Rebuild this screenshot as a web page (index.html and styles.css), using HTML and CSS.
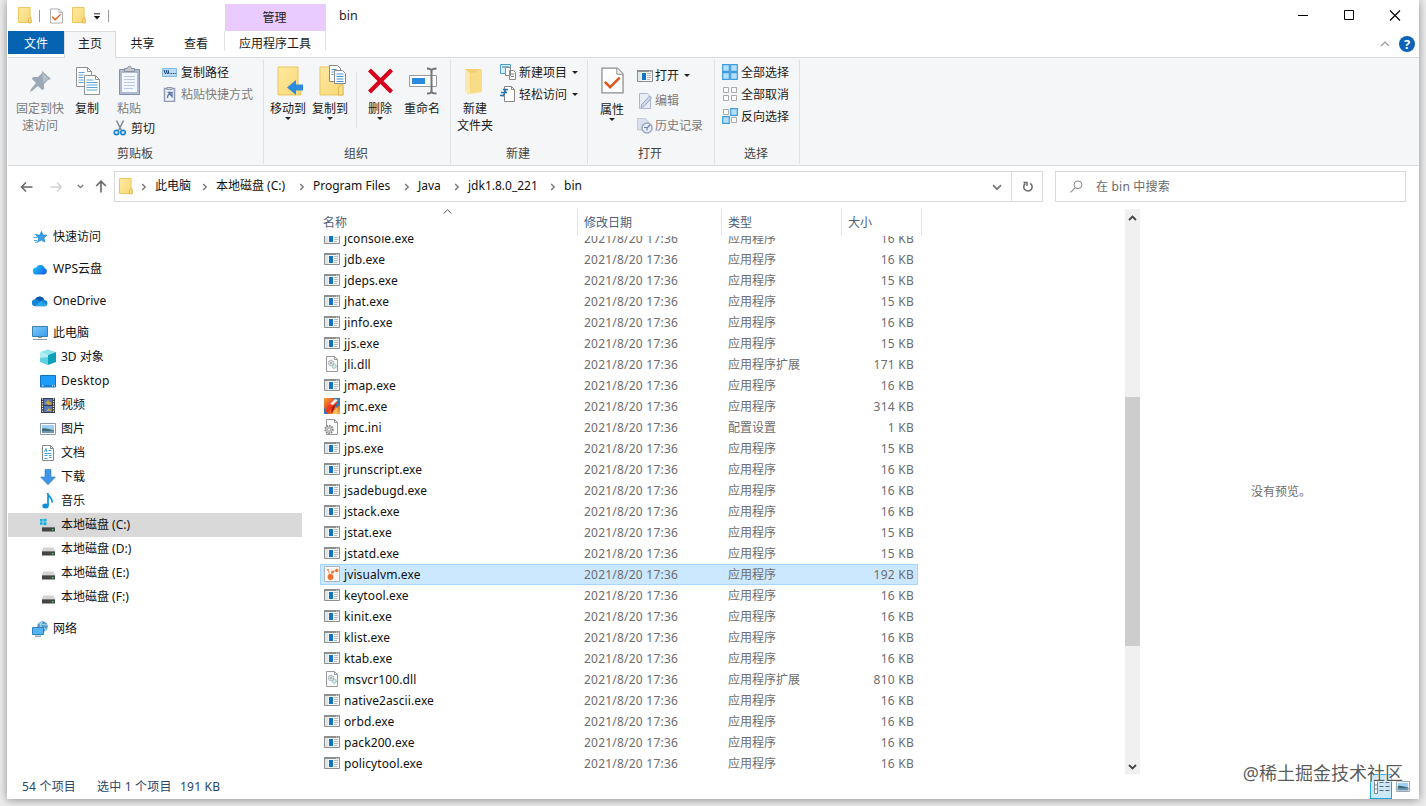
FILE: index.html
```html
<!DOCTYPE html>
<html lang="zh-CN">
<head>
<meta charset="utf-8">
<title>bin</title>
<link rel="stylesheet" href="styles.css">
</head>
<body>
<svg class="defs" width="0" height="0" aria-hidden="true">
  <defs>
    <linearGradient id="g-fold" x1="0" y1="0" x2="1" y2="1"><stop offset="0" stop-color="#ffe9a2"/><stop offset="1" stop-color="#f7d774"/></linearGradient>
    <linearGradient id="g-screen" x1="0" y1="0" x2="1" y2="1"><stop offset="0" stop-color="#7cc8fb"/><stop offset="1" stop-color="#3b9de8"/></linearGradient>
    <linearGradient id="g-wps" x1="0" y1="0" x2="1" y2="0.6"><stop offset="0" stop-color="#1fd3f5"/><stop offset="1" stop-color="#1565f0"/></linearGradient>
    <linearGradient id="g-jmc" x1="0" y1="0" x2="1" y2="1"><stop offset="0" stop-color="#f6a13a"/><stop offset=".5" stop-color="#e2401c"/><stop offset="1" stop-color="#f7b24a"/></linearGradient>
  </defs>
  <symbol id="folder" viewBox="0 0 14 17"><path d="M.5.5h11.6v11l1.2.9v3.1H.5z" fill="url(#g-fold)" stroke="#edc75f"/><path d="M10.5 16V12l2.5-1.5V16z" fill="#fbe08a" stroke="#e3b341" stroke-width=".8"/></symbol>
  <symbol id="doccheck" viewBox="0 0 24 28"><path d="M1 1h16l6 6v20H1z" fill="#fff" stroke="#8c8c8c" stroke-width="1.3"/><path d="M16.500 1v6.500H23" fill="#eee" stroke="#8c8c8c"/><path d="M4 15.500l5.500 5.500L19.500 11" fill="none" stroke="#e0561b" stroke-width="2.600"/></symbol>
  <symbol id="exe" viewBox="0 0 16 12"><path d="M.5.5h15v11H.5z" fill="#f5f5f5" stroke="#8b8f92"/><path d="M0 0h16v2H0z" fill="#8b8f92"/><path d="M12 .7h1v.8h-1zM14 .7h1v.8h-1z" fill="#fff"/><path d="M1 2h3v9H1z" fill="#dfe8e8"/><path d="M5 3h4v7H5z" fill="#0f73c6"/><path d="M10 3.500h4M10 5.500h4M10 7.500h4M10 9.500h3" stroke="#a7acb0" stroke-width=".8"/></symbol>
  <symbol id="dll" viewBox="0 0 16 16"><path d="M2.500.5h8l3 3v12h-11z" fill="#fbfbfb" stroke="#999"/><path d="M10.500.5v3h3" fill="none" stroke="#999"/><circle cx="7" cy="7" r="2.700" fill="#e0e4e5" stroke="#8b969b" stroke-dasharray="1.2 .6"/><circle cx="7" cy="7" r=".9" fill="#8b969b"/><circle cx="10.200" cy="10.300" r="2" fill="#d2eaec" stroke="#7fa9ad" stroke-dasharray="1 .5"/></symbol>
  <symbol id="ini" viewBox="0 0 16 16"><path d="M2.500.5h8l3 3v12h-11z" fill="#fbfbfb" stroke="#999"/><path d="M10.500.5v3h3" fill="none" stroke="#999"/><circle cx="5" cy="10.500" r="3.800" fill="#ccc" stroke="#8c8c8c" stroke-width="1.800" stroke-dasharray="1.500 1"/><circle cx="5" cy="10.500" r="1.500" fill="#fff" stroke="#888" stroke-width=".7"/></symbol>
  <symbol id="jmc" viewBox="0 0 16 16"><path d="M0 0h16v16H0z" fill="url(#g-jmc)"/><path d="M10 0h6v7l-4 3zM0 9l4 7H0z" fill="#3976ad"/><path d="M1 13l5-7 4-4 4 3-6 3-4 7z" fill="#f43a1d"/><path d="M6 6l5-5 3 1-5 5z" fill="#f5ede9"/><path d="M8 9l4-3-3 7-2 2z" fill="#9c1b10"/><path d="M9 14l4-5 1 7H9z" fill="#f9bd52"/></symbol>
  <symbol id="jvm" viewBox="0 0 16 16"><path d="M.5.5h15v15H.5z" fill="#fdf8f4" stroke="#aab9c5"/><path d="M6.500 10.500L4 4M6.500 10.500l2.500-5 4-1" fill="none" stroke="#f2a47e"/><circle cx="6.500" cy="11" r="2.900" fill="#ee702f"/><circle cx="4" cy="3.800" r=".9" fill="#ee702f"/><circle cx="8.500" cy="6" r="1.500" fill="#e9783c"/><circle cx="12.700" cy="4.500" r="1.700" fill="#ee702f"/></symbol>
  <symbol id="chev" viewBox="0 0 6 8"><path d="M1.200 1l3 3-3 3" fill="none" stroke="#777" stroke-width="1.400"/></symbol>
  <symbol id="drive" viewBox="0 0 16 16"><path d="M3.500 6.500h10l1.500 4H2z" fill="#d2d2d2"/><path d="M2 10.300h13v4.200H2z" fill="#444"/><path d="M2 10h13v1H2z" fill="#777"/><path d="M12 12h1.500v1.300H12z" fill="#42e06c"/></symbol>
  <symbol id="pic" viewBox="0 0 16 12"><path d="M.5.500h15v11H.5z" fill="#fff" stroke="#8b99a8"/><path d="M2 2h12v8H2z" fill="#9fd0f3"/><path d="M2 5.500c4-1 8 1.500 12 1.500v3H2z" fill="#3f6c72"/><path d="M2 8c4 0 8 0 12-.5V10H2z" fill="#6d95b5"/></symbol>
</svg>

<div class="window">
  <header class="titlebar">
    <div class="quick">
      <svg width="14" height="17"><use href="#folder"/></svg><i class="qsep"></i>
      <svg class="q-check" width="13" height="16"><use href="#doccheck"/></svg>
      <svg class="q-new" width="14" height="17"><use href="#folder"/></svg>
      <svg class="q-more" width="8" height="7" viewBox="0 0 8 7"><path d="M1 .8h6" stroke="#222" stroke-width="1"/><path d="M.8 3h6.400L4 6.500z" fill="#111"/></svg>
      <i class="qsep"></i>
    </div>
    <div class="context-head">管理</div>
    <div class="title">bin</div>
    <div class="controls">
      <svg width="12" height="12" viewBox="0 0 12 12"><path d="M1 5.500h10" stroke="#000"/></svg>
      <svg width="12" height="12" viewBox="0 0 12 12"><path d="M1.500.5h9v9h-9z" fill="none" stroke="#000"/></svg>
      <svg width="12" height="12" viewBox="0 0 12 12"><path d="M1 .5l10 10M11 .5l-10 10" stroke="#000" stroke-width="1.100"/></svg>
    </div>
  </header>

  <nav class="tabs">
    <span class="tab file">文件</span>
    <span class="tab active">主页</span>
    <span class="tab share">共享</span>
    <span class="tab view">查看</span>
    <span class="tab context">应用程序工具</span>
    <span class="tab-tools">
      <svg width="10" height="6" viewBox="0 0 10 6"><path d="M1 5l4-4 4 4" fill="none" stroke="#999" stroke-width="1.200"/></svg>
      <span class="help">?</span>
    </span>
  </nav>

  <section class="ribbon">
    <div class="group g-clip">
      <div class="items">
        <div class="big off w56"><svg width="32" height="33" viewBox="0 0 32 33"><path d="M18 6l9 8-3 1-4 4v5l-2 1-4-4-6 5-2 1 1-3 5-6-4-4 1-2h5l4-4z" fill="#9ba8b7"/><path d="M18.500 8l6 5.500-5.500 4.500" fill="#b6c0ca"/></svg><span>固定到快</span><span>速访问</span></div>
        <div class="big w38"><svg width="32" height="33" viewBox="0 0 32 33"><g fill="#fff" stroke="#909090"><path d="M5.500 2.500h11l4 4v15h-15z"/><path d="M13.500 10.500h11l4 4v15h-15z"/></g><path d="M16.500 2.500v4h4M24.500 10.500v4h4" fill="none" stroke="#909090"/><path d="M7.500 7.500h6M7.500 10h5M7.500 12.500h5M7.500 15h5M7.500 17.500h5M15.500 15h7M15.500 17.500h11M15.500 20h11M15.500 22.500h11M15.500 25h11" stroke="#5aa3da"/></svg><span>复制</span></div>
        <div class="paste">
          <div class="big off w38"><svg width="32" height="33" viewBox="0 0 32 33"><path d="M6.500 4.500h20v25h-20z" fill="#adbad0" stroke="#8292ae"/><path d="M9 8h15v19H9z" fill="#f3f7fd"/><path d="M11 11.500h11M11 14.500h11M11 17.500h11M11 20.500h11M11 23.500h9" stroke="#b8c9e2"/><path d="M11.500 6.500v-3h3c0-3 4-3 4 0h3v3z" fill="#c5c9ce" stroke="#8a929f"/></svg><span>粘贴</span></div>
          <div class="small cut"><svg width="14" height="16" viewBox="0 0 14 16"><path d="M3.500.5l5 10M10.500.5l-5 10" stroke="#7e8790" stroke-width="1.500"/><circle cx="3.500" cy="12.500" r="2.200" fill="#dff1fc" stroke="#1b85ce" stroke-width="1.700"/><circle cx="10" cy="12.500" r="2.200" fill="#dff1fc" stroke="#1b85ce" stroke-width="1.700"/></svg><span>剪切</span></div>
        </div>
        <div class="col r22">
          <div class="small"><svg width="16" height="16" viewBox="0 0 16 16"><path d="M.5 4.500h14v8H.5z" fill="#b9dcfa" stroke="#82b8e4"/><path d="M2 6l1.500 4M4 6l1.500 4M6 6l1 4M8.500 9.500h1.200M10.700 9.500h1.200M12.700 9.500h1" fill="none" stroke="#163c66" stroke-width="1"/></svg><span>复制路径</span></div>
          <div class="small off"><svg width="16" height="16" viewBox="0 0 16 16"><path d="M2.500 2.500h10v13h-10z" fill="#edf1f8" stroke="#8f9db8" stroke-width="1.500"/><path d="M5 3.500v-2h5v2z" fill="#d5d9df" stroke="#8f98a8"/><path d="M5.500 12c0-3 1-4 3-4M6.500 6.500H10v4z" fill="none" stroke="#5d73a0" stroke-width="1.300"/></svg><span>粘贴快捷方式</span></div>
        </div>
      </div>
      <div class="label">剪贴板</div>
    </div>

    <div class="group g-org">
      <div class="items">
        <div class="big w42"><svg width="32" height="33" viewBox="0 0 32 33"><path d="M6 2h20v19l3 2v7H6z" fill="url(#g-fold)" stroke="#eac762"/><path d="M31 19.500v6h-7V30l-9-7.500 9-7.500v4.500z" fill="#2c8bdc"/></svg><span>移动到</span><b class="dd"></b></div>
        <div class="big w42"><svg width="32" height="33" viewBox="0 0 32 33"><path d="M6 2h20v18l3 2v8H6z" fill="url(#g-fold)" stroke="#eac762"/><path d="M24.500 30v-8l4.500-3v11z" fill="#fae18e" stroke="#dfb648"/><g fill="#fff" stroke="#888"><path d="M15.500.5h8l3 3v13h-11z"/><path d="M20.500 5.500h8l3 3v10h-11z"/></g><path d="M17.500 4.500h5M17.500 7h2M17.500 9.500h2M22.500 9h7M22.500 11.500h7M22.500 14h7M22.500 16.500h7" stroke="#3e94d1"/></svg><span>复制到</span><b class="dd"></b></div>
        <i class="vsep"></i>
        <div class="big w42"><svg width="32" height="33" viewBox="0 0 32 33"><path d="M5.500 5l22 22M27.500 5l-22 22" stroke="#d7001a" stroke-width="4.200"/></svg><span>删除</span><b class="dd"></b></div>
        <div class="big w42"><svg width="32" height="33" viewBox="0 0 32 33"><path d="M3.500 10.500h27v11h-27z" fill="#fff" stroke="#999"/><path d="M6 13h13v6H6z" fill="#2a8ade"/><path d="M25.500 5v22M21 3.500c2 0 4.500 0 4.500 2.500 0-2.500 2.500-2.500 5-2.500M21 28.500c2 0 4.500 0 4.500-2.500 0 2.500 2.500 2.500 5 2.500" fill="none" stroke="#70767c" stroke-width="2"/></svg><span>重命名</span></div>
      </div>
      <div class="label">组织</div>
    </div>

    <div class="group g-new">
      <div class="items">
        <div class="big w42"><svg class="nf" width="32" height="33" viewBox="0 0 32 33"><path d="M7 4h16v23H14l-5 2z" fill="#f3d075"/><path d="M13 8h4l3-3h4v22l-12 2z" fill="#f8dc88"/><path d="M7 4l5 4v22l-5-4z" fill="#fce9ae"/></svg><span>新建</span><span>文件夹</span></div>
        <div class="col r22">
          <div class="small"><svg width="17" height="16" viewBox="0 0 17 16"><path d="M.5.5h10v9H.5z" fill="#d8effd" stroke="#4a9bd3"/><path d="M2 3h7" stroke="#3b76a8"/><path d="M5.500 3.500h5v8h-5zM9.500 6.500h4l2 2v7h-6z" fill="#fff" stroke="#888"/><path d="M11 10h3M11 12.500h3" stroke="#777"/></svg><span>新建项目</span><b class="dd"></b></div>
          <div class="small"><svg width="17" height="16" viewBox="0 0 17 16"><path d="M4.500.5h7l3 3v12h-10z" fill="#fff" stroke="#888"/><path d="M11.500.5v3h3" fill="none" stroke="#888"/><path d="M3 3.500h5M1 6.500h6M0 9.500h3M6 3.500l-3 7" stroke="#2273b5" stroke-width="1.300"/></svg><span>轻松访问</span><b class="dd"></b></div>
        </div>
      </div>
      <div class="label">新建</div>
    </div>

    <div class="group g-open">
      <div class="items">
        <div class="big w42 props"><svg width="32" height="33" viewBox="0 0 32 33"><use href="#doccheck" x="5" y="1" width="23" height="29"/></svg><span>属性</span><b class="dd"></b></div>
        <div class="col r25">
          <div class="small"><svg width="16" height="16" viewBox="0 0 16 16"><use href="#exe" y="2" width="16" height="12"/></svg><span>打开</span><b class="dd"></b></div>
          <div class="small off"><svg width="16" height="16" viewBox="0 0 16 16"><path d="M2.500.5h8l3 3v12h-11z" fill="#e9edf6" stroke="#aeb8cd"/><path d="M14.500 5L7 13.500l-3 1 .8-3L12.500 3z" fill="#cfd8ea" stroke="#9aa9c9"/></svg><span>编辑</span></div>
          <div class="small off"><svg width="16" height="16" viewBox="0 0 16 16"><path d="M.5.5h8l3 3v8.500H.5z" fill="#dbe0ed" stroke="#c3cbdc"/><circle cx="10" cy="10" r="5" fill="#e9eef8" stroke="#98a8c5" stroke-width="1.500"/><path d="M10 10l3-3M7 9.500h3v3" fill="none" stroke="#6d82ad" stroke-width="1.200"/></svg><span>历史记录</span></div>
        </div>
      </div>
      <div class="label">打开</div>
    </div>

    <div class="group g-sel">
      <div class="items">
        <div class="col r22">
          <div class="small"><svg width="16" height="16" viewBox="0 0 16 16"><path d="M.7.7h6.600v6.600H.7zM8.700.7h6.600v6.600H8.700zM.7 8.700h6.600v6.600H.7zM8.700 8.700h6.600v6.600H8.700z" fill="#b5e0fb" stroke="#3f9cda" stroke-width="1.200"/></svg><span>全部选择</span></div>
          <div class="small"><svg width="16" height="16" viewBox="0 0 16 16"><path d="M1.500 1.500h5v5h-5zM9.500 1.500h5v5h-5zM1.500 9.500h5v5h-5zM9.500 9.500h5v5h-5z" fill="#fff" stroke="#aaa"/></svg><span>全部取消</span></div>
          <div class="small"><svg width="16" height="16" viewBox="0 0 16 16"><path d="M1.500 1.500h5v5h-5zM9.500 9.500h5v5h-5z" fill="#fff" stroke="#aaa"/><path d="M8.700.7h6.600v6.600H8.700zM.7 8.700h6.600v6.600H.7z" fill="#b5e0fb" stroke="#3f9cda" stroke-width="1.200"/></svg><span>反向选择</span></div>
        </div>
      </div>
      <div class="label">选择</div>
    </div>
  </section>

  <section class="address">
    <div class="arrows">
      <svg width="13" height="12" viewBox="0 0 13 12"><path d="M12.500 6H1.500M6 1.500L1.500 6 6 10.500" fill="none" stroke="#666" stroke-width="1.500"/></svg>
      <svg class="fwd" width="13" height="12" viewBox="0 0 13 12"><path d="M.5 6h11M7 1.500L11.500 6 7 10.500" fill="none" stroke="#d2d2d2" stroke-width="1.400"/></svg>
      <svg class="recent" width="7" height="5" viewBox="0 0 7 5"><path d="M.8 1l2.700 2.700L6.200 1" fill="none" stroke="#777" stroke-width="1.300"/></svg>
      <svg class="up" width="12" height="13" viewBox="0 0 12 13"><path d="M6 12.500V1.500M1.200 6L6 1.200 10.800 6" fill="none" stroke="#666" stroke-width="1.600"/></svg>
    </div>
    <div class="path">
      <svg width="14" height="17"><use href="#folder"/></svg>
      <svg class="chev first" width="6" height="8"><use href="#chev"/></svg><span class="crumb c1">此电脑</span>
      <svg class="chev" width="6" height="8"><use href="#chev"/></svg><span class="crumb c2">本地磁盘 (C:)</span>
      <svg class="chev" width="6" height="8"><use href="#chev"/></svg><span class="crumb c3">Program Files</span>
      <svg class="chev" width="6" height="8"><use href="#chev"/></svg><span class="crumb c4">Java</span>
      <svg class="chev" width="6" height="8"><use href="#chev"/></svg><span class="crumb c5">jdk1.8.0_221</span>
      <svg class="chev" width="6" height="8"><use href="#chev"/></svg><span class="crumb c6">bin</span>
      <svg class="path-drop" width="10" height="7" viewBox="0 0 10 7"><path d="M1 1.200l4 4 4-4" fill="none" stroke="#777" stroke-width="1.700"/></svg>
    </div>
    <div class="refresh"><svg width="12" height="13" viewBox="0 0 12 13"><path d="M8.300 3.300A4.200 4.200 0 1 1 3.200 3.600" fill="none" stroke="#666" stroke-width="1.500"/><path d="M1.500 2.500h3.500v3.500" fill="none" stroke="#666" stroke-width="1.400"/></svg></div>
    <div class="search"><svg width="13" height="13" viewBox="0 0 13 13"><circle cx="8" cy="4.800" r="3.900" fill="none" stroke="#888"/><path d="M5.200 7.600L.6 12.400" stroke="#888" stroke-width="1.100"/></svg><span>在 bin 中搜索</span></div>
  </section>

  <main class="main">
    <aside class="tree">
      <div class="node top"><svg width="16" height="16" viewBox="0 0 16 16"><path d="M9.500 2.500l1.400 3.600 3.900.1-3 2.700 1 4.100-3.500-2.100-3.600 2.200 1.200-4.200L4 6.300l4-.2z" fill="#3aa0ea" stroke="#1d7fce" stroke-width=".8"/><path d="M2.500 5.500h3M1.500 8.500h4M2 11.500h3M3 13.500l4-1" stroke="#4aa8ea" stroke-width="1"/></svg><span>快速访问</span></div>
      <div class="node top"><svg width="16" height="16" viewBox="0 0 16 16"><path d="M4.500 13.500a3.500 3.500 0 0 1-.3-7 4.600 4.600 0 0 1 8.600.8 3.200 3.200 0 0 1-.8 6.200z" fill="url(#g-wps)"/></svg><span>WPS云盘</span></div>
      <div class="node top"><svg width="16" height="16" viewBox="0 0 16 16"><path d="M3.500 13.300a3.500 3.500 0 0 1-.4-7 5 5 0 0 1 9.100.7 3.200 3.200 0 0 1 .8 6.300z" fill="#1585d8"/><path d="M3 6.300a5 5 0 0 1 9.200.7c-2-.2-3 .4-4 1.500C6.500 7 5 6.300 3 6.300z" fill="#0b5cad"/><path d="M3 13l6-5 6 4-2 1.300z" fill="#2aa5ec"/></svg><span>OneDrive</span></div>
      <div class="node top"><svg width="16" height="16" viewBox="0 0 16 16"><path d="M.5 1.500h15v10H.5z" fill="url(#g-screen)" stroke="#3b7fae"/><path d="M6 12.500h4M1 14.500h14" stroke="#8b98a2" stroke-width="1.200"/></svg><span>此电脑</span></div>
      <div class="node"><svg width="16" height="16" viewBox="0 0 16 16"><path d="M0 3l8-2.500L16 3l-8 3z" fill="#8fe5ee"/><path d="M0 3l8 3v10l-8-3z" fill="#b2ecf2"/><path d="M16 3L8 6v10l8-3z" fill="#0ca1b9"/><path d="M0 9l8-1v8l-8-3z" fill="#5fd0df"/></svg><span>3D 对象</span></div>
      <div class="node wide"><svg width="16" height="16" viewBox="0 0 16 16"><path d="M.5 2.500h15v11.500H.5z" fill="#1e9dfb" stroke="#1272bf"/><path d="M1 12.800h14" stroke="#1f77c4"/><path d="M2 12.800h1.500M12 12.800h1M14 12.800h1" stroke="#fff"/></svg><span>Desktop</span></div>
      <div class="node"><svg width="16" height="16" viewBox="0 0 16 16"><path d="M1 1h14v15H1z" fill="#3d3d42"/><path d="M4 2h8v6H4z" fill="#5577bb"/><path d="M4 9h8v6H4z" fill="#5577bb"/><path d="M5 6l3-3 4 4-3 1zM6 14l3-3 3 3" fill="#c9a43c"/><path d="M2.500 1.500v14M13.500 1.500v14" stroke="#eee" stroke-width="1.200" stroke-dasharray="1.200 1.200"/></svg><span>视频</span></div>
      <div class="node"><svg width="16" height="16" viewBox="0 0 16 16"><use href="#pic" y="2" width="16" height="12"/></svg><span>图片</span></div>
      <div class="node"><svg width="16" height="16" viewBox="0 0 16 16"><path d="M2.500.5h8l3 3v12h-11z" fill="#fff" stroke="#888"/><path d="M10.500.5v3h3" fill="none" stroke="#888"/><path d="M4.500 7L6 3.500 7 7M8.500 5.500h3M4.500 8.500h7M4.500 10.500h3M9 10.500h2.500M9 12.500h2.500M4.500 13.500h3" fill="none" stroke="#3b9cda"/></svg><span>文档</span></div>
      <div class="node"><svg width="16" height="16" viewBox="0 0 16 16"><path d="M5 .5h6v7.500h4.500L8 15.800.5 8H5z" fill="#3f95e3" stroke="#2f7fc8" stroke-width=".6"/></svg><span>下载</span></div>
      <div class="node"><svg width="16" height="16" viewBox="0 0 16 16"><ellipse cx="5.500" cy="13" rx="3.200" ry="2.500" fill="#0a90dc"/><path d="M8 13V1M7.500 0c.5 4 5.500 4.500 4.500 9.500" fill="none" stroke="#0a90dc" stroke-width="1.700"/></svg><span>音乐</span></div>
      <div class="node sel"><svg width="16" height="16" viewBox="0 0 16 16"><use href="#drive" width="16" height="16"/><path d="M0 2h2.700v2.500H0zM3.400 1.700H6.500v2.800H3.400zM0 5.200h2.700v2.500H0zM3.400 5.200h3.100v2.800H3.400z" fill="#10b2df"/></svg><span>本地磁盘 (C:)</span></div>
      <div class="node"><svg width="16" height="16"><use href="#drive"/></svg><span>本地磁盘 (D:)</span></div>
      <div class="node"><svg width="16" height="16"><use href="#drive"/></svg><span>本地磁盘 (E:)</span></div>
      <div class="node"><svg width="16" height="16"><use href="#drive"/></svg><span>本地磁盘 (F:)</span></div>
      <div class="node net"><svg width="16" height="16" viewBox="0 0 16 16"><circle cx="10.500" cy="5.500" r="5.300" fill="#569bc9"/><path d="M10 1c-3 2-1 6 1 6s4 2 2 3M7 2c2 1 5 2 8 2" fill="none" stroke="#a9d4e6" stroke-width="1.200"/><path d="M.5 6.500h11v7H.5z" fill="#55b3f1" stroke="#2e83bd"/><path d="M3 15.200h6" stroke="#7595a8" stroke-width="1.200"/></svg><span>网络</span></div>
    </aside>

    <section class="files">
      <div class="cols">
        <span class="h-name">名称<svg class="sort" width="9" height="5" viewBox="0 0 9 5"><path d="M.7 4.500l3.800-3.700 3.800 3.700" fill="none" stroke="#555"/></svg></span><span class="h-date">修改日期</span><span class="h-type">类型</span><span class="h-size">大小</span>
      </div>
      <div class="rows">
        <div class="row"><svg><use href="#exe"/></svg><span class="n">jconsole.exe</span><span class="d">2021/8/20 17:36</span><span>应用程序</span><span class="s">16 KB</span></div>
        <div class="row"><svg><use href="#exe"/></svg><span class="n">jdb.exe</span><span class="d">2021/8/20 17:36</span><span>应用程序</span><span class="s">16 KB</span></div>
        <div class="row"><svg><use href="#exe"/></svg><span class="n">jdeps.exe</span><span class="d">2021/8/20 17:36</span><span>应用程序</span><span class="s">15 KB</span></div>
        <div class="row"><svg><use href="#exe"/></svg><span class="n">jhat.exe</span><span class="d">2021/8/20 17:36</span><span>应用程序</span><span class="s">15 KB</span></div>
        <div class="row"><svg><use href="#exe"/></svg><span class="n">jinfo.exe</span><span class="d">2021/8/20 17:36</span><span>应用程序</span><span class="s">16 KB</span></div>
        <div class="row"><svg><use href="#exe"/></svg><span class="n">jjs.exe</span><span class="d">2021/8/20 17:36</span><span>应用程序</span><span class="s">15 KB</span></div>
        <div class="row"><svg class="tall"><use href="#dll"/></svg><span class="n">jli.dll</span><span class="d">2021/8/20 17:36</span><span>应用程序扩展</span><span class="s">171 KB</span></div>
        <div class="row"><svg><use href="#exe"/></svg><span class="n">jmap.exe</span><span class="d">2021/8/20 17:36</span><span>应用程序</span><span class="s">16 KB</span></div>
        <div class="row"><svg class="tall"><use href="#jmc"/></svg><span class="n">jmc.exe</span><span class="d">2021/8/20 17:36</span><span>应用程序</span><span class="s">314 KB</span></div>
        <div class="row"><svg class="tall"><use href="#ini"/></svg><span class="n">jmc.ini</span><span class="d">2021/8/20 17:36</span><span>配置设置</span><span class="s">1 KB</span></div>
        <div class="row"><svg><use href="#exe"/></svg><span class="n">jps.exe</span><span class="d">2021/8/20 17:36</span><span>应用程序</span><span class="s">15 KB</span></div>
        <div class="row"><svg><use href="#exe"/></svg><span class="n">jrunscript.exe</span><span class="d">2021/8/20 17:36</span><span>应用程序</span><span class="s">16 KB</span></div>
        <div class="row"><svg><use href="#exe"/></svg><span class="n">jsadebugd.exe</span><span class="d">2021/8/20 17:36</span><span>应用程序</span><span class="s">16 KB</span></div>
        <div class="row"><svg><use href="#exe"/></svg><span class="n">jstack.exe</span><span class="d">2021/8/20 17:36</span><span>应用程序</span><span class="s">16 KB</span></div>
        <div class="row"><svg><use href="#exe"/></svg><span class="n">jstat.exe</span><span class="d">2021/8/20 17:36</span><span>应用程序</span><span class="s">15 KB</span></div>
        <div class="row"><svg><use href="#exe"/></svg><span class="n">jstatd.exe</span><span class="d">2021/8/20 17:36</span><span>应用程序</span><span class="s">15 KB</span></div>
        <div class="row picked"><svg class="tall"><use href="#jvm"/></svg><span class="n">jvisualvm.exe</span><span class="d">2021/8/20 17:36</span><span>应用程序</span><span class="s">192 KB</span></div>
        <div class="row"><svg><use href="#exe"/></svg><span class="n">keytool.exe</span><span class="d">2021/8/20 17:36</span><span>应用程序</span><span class="s">16 KB</span></div>
        <div class="row"><svg><use href="#exe"/></svg><span class="n">kinit.exe</span><span class="d">2021/8/20 17:36</span><span>应用程序</span><span class="s">16 KB</span></div>
        <div class="row"><svg><use href="#exe"/></svg><span class="n">klist.exe</span><span class="d">2021/8/20 17:36</span><span>应用程序</span><span class="s">16 KB</span></div>
        <div class="row"><svg><use href="#exe"/></svg><span class="n">ktab.exe</span><span class="d">2021/8/20 17:36</span><span>应用程序</span><span class="s">16 KB</span></div>
        <div class="row"><svg class="tall"><use href="#dll"/></svg><span class="n">msvcr100.dll</span><span class="d">2021/8/20 17:36</span><span>应用程序扩展</span><span class="s">810 KB</span></div>
        <div class="row"><svg><use href="#exe"/></svg><span class="n">native2ascii.exe</span><span class="d">2021/8/20 17:36</span><span>应用程序</span><span class="s">16 KB</span></div>
        <div class="row"><svg><use href="#exe"/></svg><span class="n">orbd.exe</span><span class="d">2021/8/20 17:36</span><span>应用程序</span><span class="s">16 KB</span></div>
        <div class="row"><svg><use href="#exe"/></svg><span class="n">pack200.exe</span><span class="d">2021/8/20 17:36</span><span>应用程序</span><span class="s">16 KB</span></div>
        <div class="row"><svg><use href="#exe"/></svg><span class="n">policytool.exe</span><span class="d">2021/8/20 17:36</span><span>应用程序</span><span class="s">16 KB</span></div>
      </div>
    </section>

    <div class="scroll">
      <svg width="9" height="6" viewBox="0 0 9 6"><path d="M1 5l3.500-3.500L8 5" fill="none" stroke="#444" stroke-width="1.800"/></svg>
      <div class="thumb"></div>
      <svg class="down" width="9" height="6" viewBox="0 0 9 6"><path d="M1 1l3.500 3.500L8 1" fill="none" stroke="#444" stroke-width="1.800"/></svg>
    </div>
    <section class="preview">没有预览。</section>
  </main>

  <footer class="status">
    <span class="st1">54 个项目</span><span class="st2">选中 1 个项目</span><span>191 KB</span>
    <div class="views">
      <span class="details"><svg width="17" height="14" viewBox="0 0 17 14"><path d="M1.500.5h3v13h-3zM1.500 5h3M1.500 9h3" fill="#fff" stroke="#7d8990"/><path d="M6.500 2.500h4M6.500 6.500h4M6.500 10.500h4M12.500 2.500h4M12.500 6.500h4M12.500 10.500h4" stroke="#55666f"/></svg></span>
      <svg class="thumbs" width="14" height="11" viewBox="0 0 16 12" preserveAspectRatio="none"><use href="#pic" width="16" height="12"/></svg>
    </div>
  </footer>
  <div class="mark">@稀土掘金技术社区</div>
</div>
</body>
</html>
```
FILE: styles.css
```css
* { box-sizing: border-box; }
body {
  margin: 0;
  height: 806px;
  overflow: hidden;
  background: #ededed;
  font: 12px/17px "Noto Sans", "Noto Sans CJK SC", sans-serif;
  color: #1a1a1a;
}
svg { display: block; flex: none; }
.defs { position: absolute; }
i, b { font-style: normal; font-weight: normal; display: block; flex: none; }

.window {
  position: relative;
  display: flex;
  flex-direction: column;
  width: 1412px;
  height: 799px;
  margin-left: 7px;
  padding-left: 1px;
  background: #fff;
  box-shadow: 0 1px 9px rgba(0, 0, 0, .4);
}

.titlebar { display: flex; height: 31px; }
.quick { display: flex; align-items: center; width: 217px; padding-left: 10px; }
.qsep { width: 1px; height: 12px; margin-left: 7px; background: #999; }
.q-check { margin-left: 10px; }
.q-new { margin-left: 9px; }
.q-more { margin: 2px 0 0 7px; }
.context-head { width: 101px; height: 27px; margin-top: 4px; background: #e9cbff; text-align: center; line-height: 27px; padding-right: 2px; }
.title { margin-left: 13px; line-height: 31px; font-size: 12.500px; }
.controls { display: flex; align-items: center; gap: 34px; margin-left: auto; padding-right: 18px; }

.tabs { display: flex; height: 27px; border-bottom: 1px solid #dadbdc; line-height: 25px; text-align: center; }
.tab { flex: none; }
.file { width: 56px; height: 23px; background: #0563b1; color: #fff; }
.active { width: 52px; height: 27px; background: #f5f6f7; border: 1px solid #dadbdc; border-bottom: 0; line-height: 23px; }
.share { width: 53px; }
.view { width: 54px; }
.context { width: 102px; margin-left: 1px; border: 1px solid #e4e0e6; border-width: 0 1px; height: 20px; }
.tab-tools { display: flex; align-items: center; gap: 9px; margin-left: auto; padding-right: 4px; }
.help { width: 16px; height: 16px; border-radius: 50%; background: #0c63b8; color: #fff; font-weight: 700; font-size: 13px; line-height: 16px; }

.ribbon { display: flex; height: 108px; background: #f5f6f7; border-bottom: 1px solid #dadbdc; }
.group { display: flex; flex-direction: column; justify-content: space-between; height: 104px; margin-top: 2px; border-right: 1px solid #e1e2e4; padding-left: 3px; }
.g-clip { width: 256px; padding-left: 4px; }
.g-org { width: 187px; }
.g-new { width: 137px; }
.g-open { width: 127px; }
.g-sel { width: 85px; padding-left: 7px; }
.items { display: flex; align-items: flex-start; }
.label { text-align: center; color: #444; line-height: 17px; padding: 0 2px 2px 0; margin-left: -3px; }
.g-sel .label { margin-left: -7px; }
.big { display: flex; flex-direction: column; align-items: center; padding-top: 5px; flex: none; }
.big span { white-space: nowrap; }
.big svg + span { margin-top: 2px; }
.props svg + span { margin-top: 3px; }
.nf { margin-left: -2px; }
.w56 { width: 56px; }
.w38 { width: 38px; }
.w42 { width: 42px; }
.off { color: #7c7c7c; }
.dd { border: 3px solid transparent; border-top-color: #222; border-bottom: 0; }
.vsep { width: 1px; height: 56px; margin: 12px 2px 0 5px; background: #e1e2e4; }
.paste { margin-left: 4px; width: 52px; }
.small { display: flex; align-items: center; gap: 3px; white-space: nowrap; }
.small .dd { margin-left: 3px; }
.cut { height: 22px; margin-left: 3px; gap: 4px; }
.r22 .small { height: 22px; }
.r25 .small { height: 25px; gap: 2px; }
.r22 { padding-top: 1px; }
.r25 { padding-top: 3px; }
.g-new .small { gap: 2px; }
.g-new .r22, .g-open .r25 { padding-left: 4px; }

.address { display: flex; height: 42px; padding-top: 5px; }
.arrows { display: flex; align-items: center; width: 106px; height: 31px; padding-left: 12px; }
.fwd { margin-left: 17px; }
.recent { margin-left: 14px; }
.up { margin-left: 11px; }
.path, .refresh, .search { display: flex; align-items: center; height: 31px; border: 1px solid #d9d9d9; }
.path { width: 898px; padding-left: 4px; }
.chev { margin: 0 8px 0 9px; }
.chev.first { margin-left: 8px; }
.crumb { color: #111; white-space: nowrap; flex: none; padding-bottom: 2px; }
.c1 { width: 38px; }
.c2 { width: 74px; }
.c3 { width: 82px; }
.c4 { width: 27px; }
.c5 { width: 73px; }
.path-drop { margin: 2px 9px 0 auto; }
.refresh { width: 32px; margin-left: -1px; justify-content: center; padding-left: 1px; }
.search { width: 351px; margin-left: 12px; padding-left: 14px; gap: 13px; color: #6a6a6a; letter-spacing: .2px; }

.main { display: flex; height: 566px; }
.tree { width: 294px; padding-top: 17px; flex: none; color: #111; }
.node { display: flex; align-items: center; gap: 5px; height: 24px; padding-left: 32px; }
.node span { padding-bottom: 2px; }
.node.wide span { letter-spacing: .3px; }
.node.top { padding-left: 24px; margin-bottom: 8px; }
.node.top:nth-child(4) { margin-bottom: 0; }
.node.net { padding-left: 24px; margin-top: 8px; }
.sel { background: #d9d9d9; }

.files { width: 822px; flex: none; margin-left: 1px; overflow: hidden; height: 566px; }
.cols { display: flex; height: 28px; padding-left: 17px; line-height: 30px; color: #4c607a; background: #fff; }
.cols span { border-right: 1px solid #e5e5e5; flex: none; }
.h-name { position: relative; width: 258px; padding-left: 3px; }
.h-date { width: 144px; padding-left: 6px; }
.h-type { width: 120px; padding-left: 6px; }
.h-size { width: 80px; padding-left: 6px; }
.sort { position: absolute; left: 123px; top: 1px; }
.rows { height: 538px; overflow: hidden; display: flex; flex-direction: column; justify-content: flex-end; }
.row {
  display: grid;
  grid-template-columns: 20px 240px 144px 120px 66px;
  align-items: center;
  flex: none;
  width: 598px;
  height: 21px;
  margin-left: 17px;
  padding-left: 4px;
  color: #6d6d6d;
  line-height: 20px;
}
.row svg { width: 16px; height: 12px; margin-bottom: 1px; }
.row svg.tall { height: 16px; }
.n { color: #111; letter-spacing: .1px; }
.d { letter-spacing: .22px; }
.s { text-align: right; letter-spacing: .25px; }
.picked { background: #cce8ff; box-shadow: inset 0 0 0 1px #a6d6fb; }

.scroll { display: flex; flex-direction: column; align-items: center; width: 15px; height: 565px; margin-top: 1px; padding-top: 6px; background: #f0f0f0; }
.thumb { width: 15px; height: 249px; margin-top: 176px; background: #cdcdcd; }
.down { margin-top: 118px; }
.preview { width: 278px; height: 566px; padding-left: 4px; text-align: center; color: #6d6d6d; line-height: 567px; }

.status { display: flex; height: 25px; padding-left: 14px; color: #2a4668; line-height: 26px; letter-spacing: .2px; }
.st1 { width: 75px; }
.st2 { width: 83px; }
.views { display: flex; align-items: center; margin-left: auto; padding-right: 9px; gap: 4px; }
.details { display: flex; align-items: center; justify-content: center; width: 22px; height: 25px; background: #cbe8f6; border: 1px solid #26a0da; }
.mark {
  position: absolute;
  right: 16px;
  top: 760px;
  font-size: 18px;
  line-height: 26px;
  color: rgba(60, 60, 60, .85);
  text-shadow: 0 0 2px #fff, 0 0 2px #fff;
  white-space: nowrap;
}
```
